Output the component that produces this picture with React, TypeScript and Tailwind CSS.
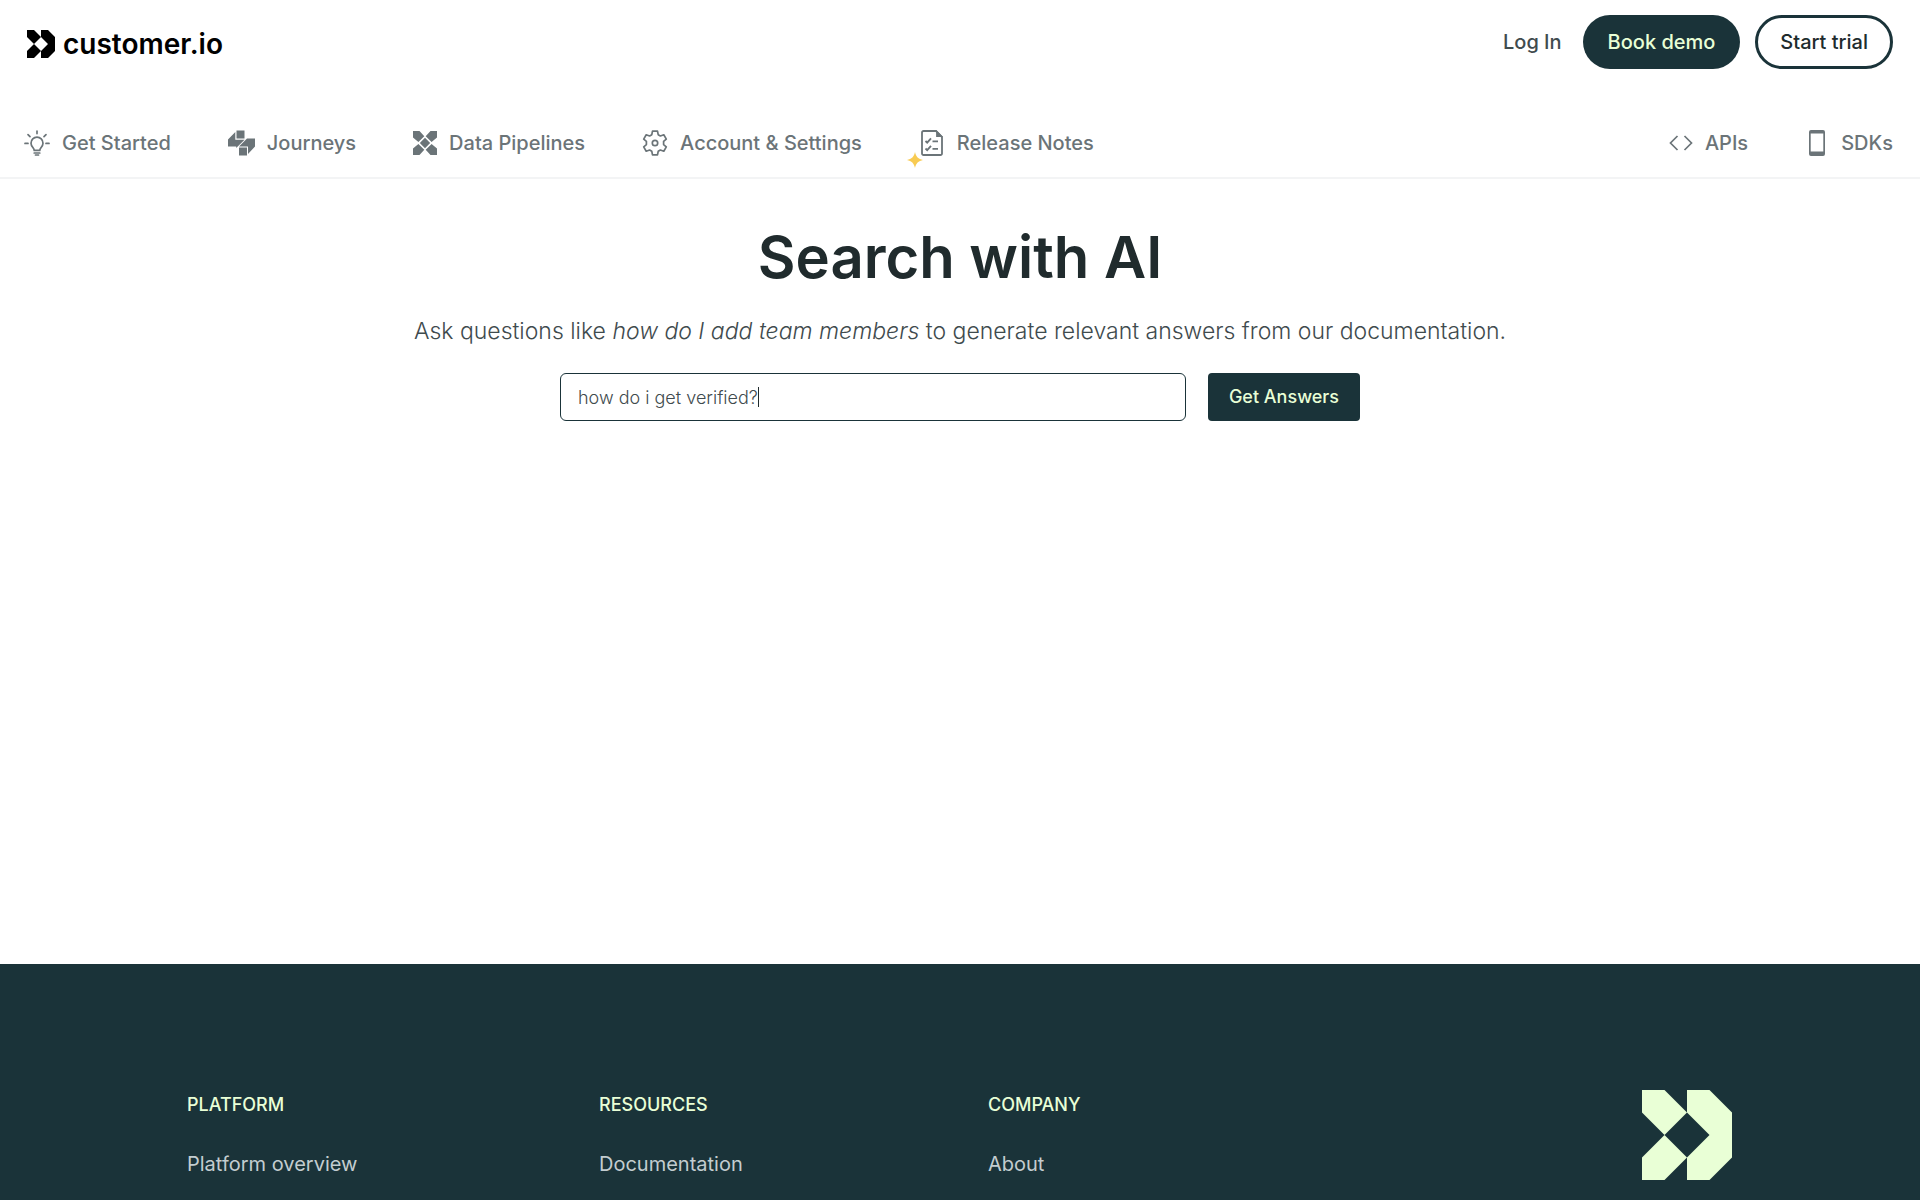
import type { ReactNode } from "react";

function LogoMark({ className }: { className: string }) {
  return (
    <svg viewBox="0 0 90 90" fill="currentColor" className={className} aria-hidden="true">
      <path d="M0 0h22.5L45 22.5 22.5 45 0 22.5z" />
      <path d="M0 90h22.5L45 67.5 22.5 45 0 67.5z" />
      <path d="M45 0h22.5L90 22.5v45L67.5 90H45V67.5L67.5 45 45 22.5z" />
    </svg>
  );
}

function BulbIcon() {
  return (
    <svg viewBox="0 0 26 26" fill="none" stroke="currentColor" strokeWidth="1.7" strokeLinecap="round" className="size-[26px]" aria-hidden="true">
      <path d="M13 1v2.6M1 13.4h3M22 13.4h3M4 4.6l2 2M22 4.6l-2 2" />
      <path d="M10.2 20.4c0-2.2-3.2-3.8-3.2-7.2a6 6 0 0 1 12 0c0 3.4-3.2 5-3.2 7.2z" strokeLinejoin="round" />
      <path d="M10.2 23h5.6M11.5 25h3" />
    </svg>
  );
}

function JourneysIcon() {
  return (
    <svg viewBox="0 0 27 26" fill="currentColor" className="h-[26px] w-[27px]" aria-hidden="true">
      <path d="M8.5.5h8v8h-8zM11 17.5h8v8h-8z" />
      <path d="M0 9.5 7.3 2v7.7h9.2L8.2 18v-1.5H0z" />
      <path d="M19 8.5h8v8L20 24v-7.5h-9z" />
    </svg>
  );
}

function PipelinesIcon() {
  return (
    <svg viewBox="0 0 24 24" fill="currentColor" className="size-6" aria-hidden="true">
      <path d="M0 0h6.5l4.8 5.2L5.4 11 0 6.5zM24 0h-6.5l-4.8 5.2 5.9 5.8L24 6.5zM0 24h6.5l4.8-5.2L5.4 13 0 17.5zM24 24h-6.5l-4.8-5.2 5.9-5.8 5.4 4.5z" />
      <path d="m12 6.8 5.2 5.2-5.2 5.2L6.8 12z" />
    </svg>
  );
}

function GearIcon() {
  return (
    <svg viewBox="0 0 26 26" fill="none" stroke="currentColor" strokeWidth="1.7" strokeLinejoin="round" className="size-[26px]" aria-hidden="true">
      <path d="M10.5 1.2h5l.7 3.5L18.400 6l3.400-1.200 2.500 4.300-2.700 2.300v3.200l2.700 2.300-2.500 4.300-3.400-1.200-2.200 1.300-.7 3.500h-5l-.7-3.500L7.600 20l-3.400 1.200-2.500-4.300 2.700-2.300v-3.200L1.700 9.100l2.500-4.300L7.600 6l2.200-1.300z" />
      <circle cx="13" cy="13" r="2.7" />
    </svg>
  );
}

function NotesIcon() {
  return (
    <svg viewBox="0 0 22 26" fill="none" stroke="currentColor" strokeWidth="1.8" className="mx-0.5 h-[26px] w-[22px]" aria-hidden="true">
      <path d="M2.5 1H15l6 6v16.500a1.500 1.500 0 0 1-1.500 1.500h-17A1.500 1.500 0 0 1 1 23.500v-21A1.500 1.500 0 0 1 2.500 1z" />
      <path d="M16 2v4h4z" fill="currentColor" />
      <path d="m4.500 11 1.700 1.700L10 8.300M11.500 11.300H17M4.500 18.500l1.700 1.700 3.800-4.400M11.500 18.800H17" />
    </svg>
  );
}

function CodeIcon() {
  return (
    <svg viewBox="0 0 24 16" fill="none" stroke="currentColor" strokeWidth="1.7" className="h-4 w-6" aria-hidden="true">
      <path d="m8.500 1-7 7 7 7M15.500 1l7 7-7 7" />
    </svg>
  );
}

function PhoneIcon() {
  return (
    <svg viewBox="0 0 16 26" fill="currentColor" className="mx-1 h-[26px] w-4" aria-hidden="true">
      <path fillRule="evenodd" d="M2 0h12a2 2 0 0 1 2 2v22a2 2 0 0 1-2 2H2a2 2 0 0 1-2-2V2a2 2 0 0 1 2-2zm-.3 3.500v18h12.600v-18z" />
    </svg>
  );
}

function Sparkle() {
  return (
    <svg viewBox="0 0 16 16" fill="#f8cb52" className="absolute -bottom-3 -left-3 size-4" aria-hidden="true">
      <path d="M8 0c.8 4.500 3.500 7.200 8 8-4.500.8-7.200 3.500-8 8-.8-4.500-3.500-7.200-8-8 4.500-.8 7.200-3.500 8-8z" />
    </svg>
  );
}

function NavLink({ icon, label }: { icon: ReactNode; label: string }) {
  return (
    <a href="#" className="flex items-center gap-3">
      <span className="relative">{icon}</span>
      {label}
    </a>
  );
}

function FooterColumn({ title, link }: { title: string; link: string }) {
  return (
    <div>
      <h2 className="text-lg leading-[30px] font-medium text-[#e9ffd6]">{title}</h2>
      <ul className="mt-7">
        <li>
          <a href="#" className="text-xl leading-8 text-[#c3cdd0]">
            {link}
          </a>
        </li>
      </ul>
    </div>
  );
}

export default function App() {
  return (
    <div className="flex h-screen flex-col overflow-hidden bg-white font-['Inter',sans-serif] text-[#202b2d]">
      <header className="border-b-2 border-[#f3f4f5]">
        <div className="flex items-center justify-between px-[27px] pt-[15px]">
          <a href="#" className="flex items-center gap-2 pt-1 text-black">
            <LogoMark className="size-7" />
            <span className="text-[28px] leading-8 font-semibold">customer.io</span>
          </a>
          <div className="flex items-center gap-[15px]">
            <a href="#" className="mr-1.5 text-xl font-medium text-[#3f4b4e]">
              Log In
            </a>
            <button type="button" className="h-[54px] rounded-full bg-[#1a3339] px-[25px] text-xl font-medium text-[#e9ffd6]">
              Book demo
            </button>
            <button type="button" className="h-[54px] rounded-full border-[3px] border-[#1a3339] px-[22px] text-xl font-medium">
              Start trial
            </button>
          </div>
        </div>
        <nav className="flex items-center justify-between pt-[58px] pr-[27px] pb-[18px] pl-6 text-xl leading-8 font-medium text-[#6b7478]">
          <div className="flex gap-[57px]">
            <NavLink icon={<BulbIcon />} label="Get Started" />
            <NavLink icon={<JourneysIcon />} label="Journeys" />
            <NavLink icon={<PipelinesIcon />} label="Data Pipelines" />
            <NavLink icon={<GearIcon />} label="Account & Settings" />
            <NavLink
              icon={
                <>
                  <NotesIcon />
                  <Sparkle />
                </>
              }
              label="Release Notes"
            />
          </div>
          <div className="flex gap-[57px]">
            <NavLink icon={<CodeIcon />} label="APIs" />
            <NavLink icon={<PhoneIcon />} label="SDKs" />
          </div>
        </nav>
      </header>

      <main className="flex-1 px-6 pt-[38px] text-center">
        <h1 className="text-[58px] leading-20 font-semibold">Search with AI</h1>
        <p className="mt-4 text-[23px] leading-9 font-light text-[#3f4b4e]">
          Ask questions like <em>how do I add team members</em> to generate relevant answers from our documentation.
        </p>
        <form className="mx-auto mt-6 flex w-full max-w-[800px] gap-[22px]" onSubmit={(e) => e.preventDefault()}>
          <div className="relative min-w-0 flex-1">
            <input
              type="text"
              aria-label="Ask a question"
              defaultValue="how do i get verified?"
              className="h-12 w-full rounded-md border border-[#1a3339] px-[17px] text-lg font-light text-[#3f4b4e] caret-transparent outline-none"
            />
            <span className="absolute top-3.5 left-[198px] h-5 w-px bg-[#202b2d]" />
          </div>
          <button type="submit" className="h-12 rounded bg-[#1a3339] px-[21px] text-lg font-medium text-[#e9ffd6]">
            Get Answers
          </button>
        </form>
      </main>

      <footer className="h-[236px] shrink-0 bg-[#1a3339] pt-[126px] pr-[188px] pl-[187px]">
        <div className="grid grid-cols-[412fr_389fr_654fr_90px]">
          <FooterColumn title="PLATFORM" link="Platform overview" />
          <FooterColumn title="RESOURCES" link="Documentation" />
          <FooterColumn title="COMPANY" link="About" />
          <LogoMark className="size-[90px] text-[#e9ffd6]" />
        </div>
      </footer>
    </div>
  );
}
